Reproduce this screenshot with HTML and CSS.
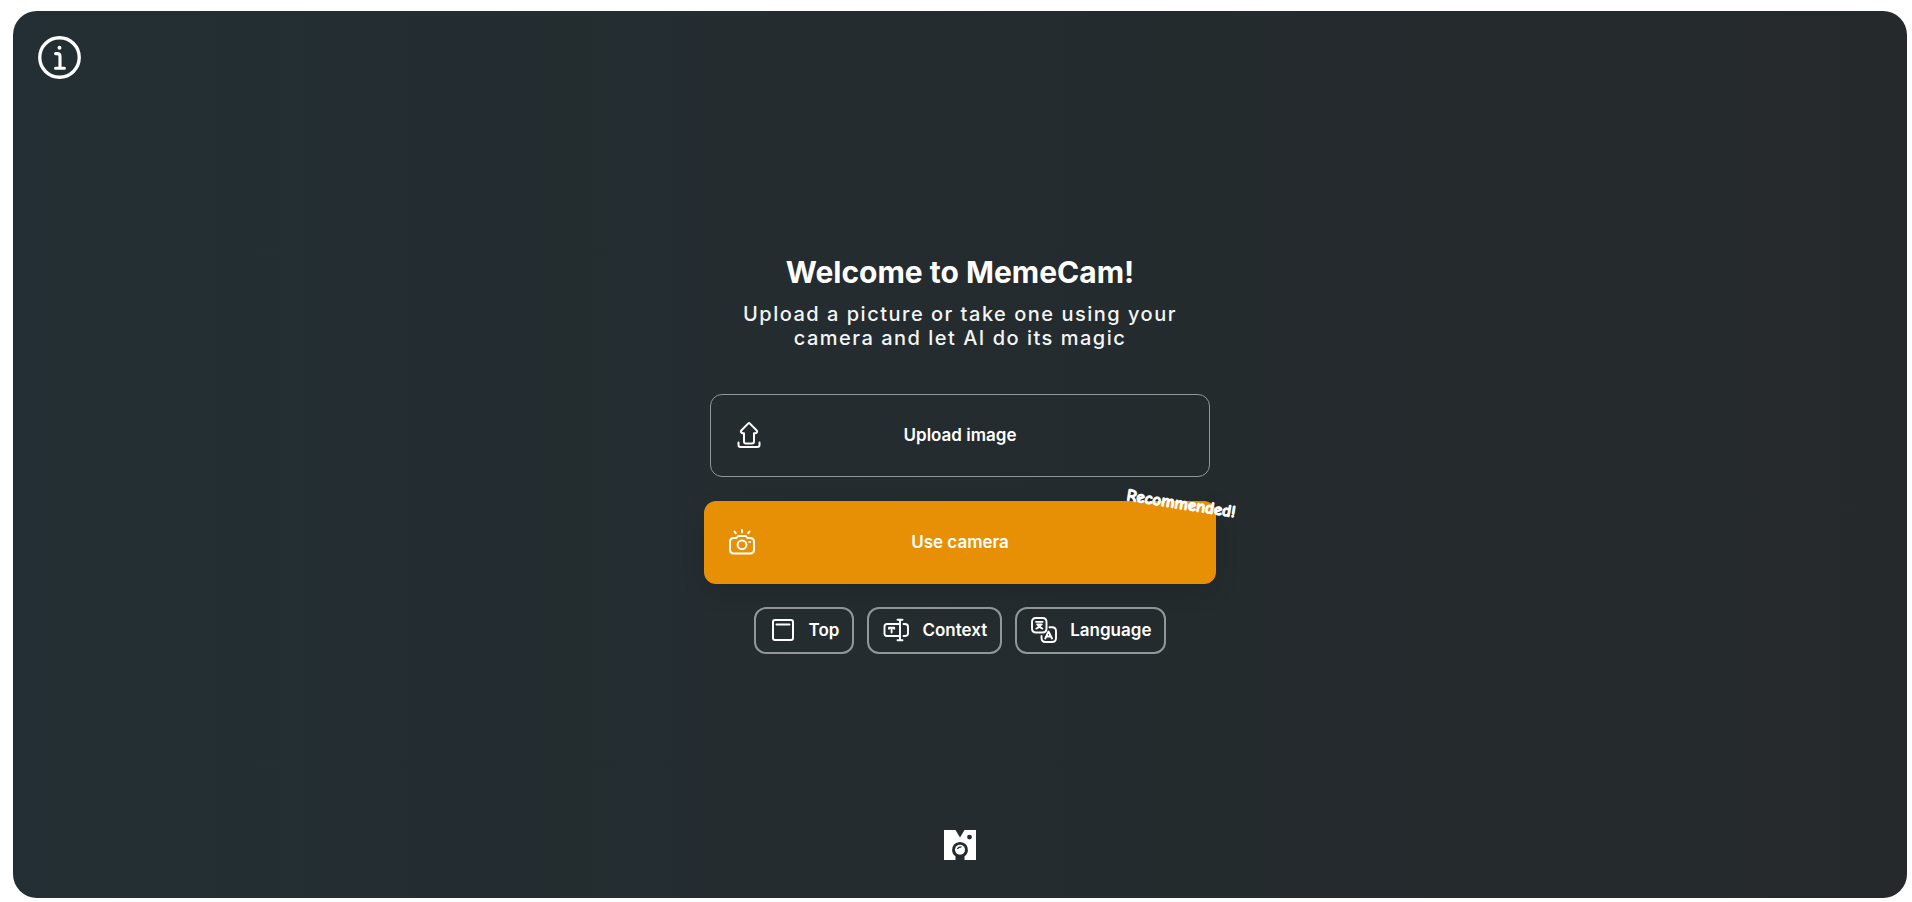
FILE: index.html
```html
<!DOCTYPE html>
<html lang="en">
<head>
<meta charset="utf-8">
<meta name="viewport" content="width=device-width, initial-scale=1">
<title>MemeCam</title>
<link rel="stylesheet" href="styles.css">
</head>
<body>
<div class="card">
  <header class="top">
    <button class="info" type="button" aria-label="About">
      <svg viewBox="0 0 44 44" width="43" height="43" fill="none" stroke="currentColor" stroke-linecap="round" stroke-linejoin="round">
        <circle cx="22" cy="22" r="20.200" stroke-width="3.400"/>
        <path d="M18 18h1.500q3 0 3 3v12M18 33h9" stroke-width="3.200"/>
        <circle cx="22" cy="12" r="2" fill="currentColor" stroke="none"/>
      </svg>
    </button>
  </header>
  <main class="content">
    <h1 class="title">Welcome to MemeCam!</h1>
    <p class="subtitle">Upload a picture or take one using your camera and let AI do its magic</p>
    <button class="action action-upload" type="button">
      <svg class="action-icon" viewBox="0 0 26 26" width="26" height="26" fill="none" stroke="currentColor" stroke-width="2" stroke-linecap="round" stroke-linejoin="round">
        <path d="M12.300 1.400q.700-.6 1.400 0l6.800 6.800c1.300 1.400.2 3-1.400 3H18v8.300q0 2-2 2h-6q-2 0-2-2v-8.300H6.900c-1.600 0-2.700-1.600-1.400-3zM2.500 20.500v2.500q0 2 2 2h17q2 0 2-2v-2.500"/>
      </svg>
      <span>Upload image</span>
    </button>
    <button class="action action-camera" type="button">
      <svg class="action-icon" viewBox="0 0 26 26" width="26" height="26" fill="none" stroke="currentColor" stroke-width="2" stroke-linecap="round" stroke-linejoin="round">
        <path d="M13 1v2.200M5.500 2.500l1.200 1.700M20.500 2.500l-1.200 1.700M5 9h2.500l1.200-1.500Q9.200 7 10 7h6q.8 0 1.300.5L18.500 9H21q4 0 4 4v7.500q0 4-4 4H5q-4 0-4-4V13q0-4 4-4z"/>
        <circle cx="13" cy="15.800" r="4.400"/>
        <path d="M20 13h1.200M21.200 12.800v.4" stroke-width="1.600"/>
      </svg>
      <span>Use camera</span>
      <span class="badge">Recommended!</span>
    </button>
    <div class="chips">
      <button class="chip" type="button">
        <svg viewBox="0 0 26 26" width="26" height="26" fill="none" stroke="currentColor" stroke-width="2" stroke-linecap="round" stroke-linejoin="round">
          <rect x="3" y="3" width="20" height="20" rx="2"/><path d="M6.500 7.500h13"/>
        </svg>
        <span>Top</span>
      </button>
      <button class="chip" type="button">
        <svg viewBox="0 0 26 26" width="26" height="26" fill="none" stroke="currentColor" stroke-width="1.900" stroke-linecap="round" stroke-linejoin="round">
          <path d="M17 3v20M14.500 2.800h5M14.500 23.200h5M16.500 7H4Q1.500 7 1.500 9.500v7Q1.500 19 4 19h12.500M20.500 7h1Q25 7 25 9.500v7q0 2.500-3.500 2.500h-1"/>
          <path d="M6 11.700v-.9h5.200v.9M8.600 10.800v4.700"/>
        </svg>
        <span>Context</span>
      </button>
      <button class="chip" type="button">
        <svg viewBox="0 0 26 26" width="26" height="26" fill="none" stroke="currentColor" stroke-width="1.900" stroke-linecap="round" stroke-linejoin="round">
          <path d="M15.500 10.500v1q0 4-4 4H5q-4 0-4-4V5q0-4 4-4h6.500q4 0 4 4zM18.500 10.200H21q4 0 4 4V21q0 4-4 4h-6.500q-4 0-4-4v-2"/>
          <path d="M5 4.800h6.700M6.500 7.300q1 3.200 5 4.300M10.200 7.300q-1 3.200-5 4.300M6 7.300h4.800" stroke-width="1.700"/>
          <path d="M14.300 21.500l3.200-7 3.500 7M15.500 19.500h4.300"/>
        </svg>
        <span>Language</span>
      </button>
    </div>
  </main>
  <footer class="bottom">
    <svg viewBox="0 0 32 30" width="32" height="30" role="img" aria-label="MemeCam logo">
      <path fill="#fff" fill-rule="evenodd" d="M0 0h11.500l4.500 7.500L20.500 0H32v30H20.500v-3.500a8 8 0 1 0-9 0V30H0zM25.500 4.700a2.400 2.400 0 1 0 0 4.800 2.400 2.400 0 0 0 0-4.800z"/>
      <circle cx="16" cy="19.700" r="5" fill="#fff"/>
      <path d="M13.300 18.800q1.500-2 4.200-1.900" fill="none" stroke="#242c2f" stroke-width="1.200"/>
    </svg>
  </footer>
</div>
</body>
</html>
```
FILE: styles.css
```css
* {
  box-sizing: border-box;
}

body {
  margin: 0;
  min-height: 100vh;
  padding: 11px 5px 4px 13px;
  display: flex;
  background: #fff;
  color: #fff;
  font-family: Inter, "Liberation Sans", sans-serif;
}

button {
  color: inherit;
  font: inherit;
  background: none;
  border: 0;
  cursor: pointer;
}

svg {
  display: block;
  flex: none;
}

.card {
  flex: 1;
  display: grid;
  grid-template-rows: 1fr auto 1fr;
  border-radius: 24px;
  background: linear-gradient(90deg, #232f34 0%, #242c2f 45%, #25292b 100%);
}

.top {
  padding: 25px;
}

.info {
  padding: 0;
  border-radius: 50%;
}

.content {
  display: flex;
  flex-direction: column;
  align-items: center;
  padding: 0 16px 1px;
}

.title {
  margin: 0;
  font-size: 30px;
  line-height: 36px;
  font-weight: 700;
}

.subtitle {
  margin: 12px 0 44px;
  max-width: 450px;
  text-align: center;
  font-size: 20px;
  line-height: 24px;
  font-weight: 500;
  letter-spacing: 1.5px;
  color: #f4f5f5;
}

.action {
  position: relative;
  display: flex;
  align-items: center;
  justify-content: center;
  width: 100%;
  height: 83px;
  padding: 0 0 2px;
  border-radius: 12px;
  font-size: 17px;
  font-weight: 600;
}

.action-upload {
  max-width: 500px;
  border: 1px solid #92979a;
}

.action-camera {
  max-width: 512px;
  margin: 24px 0 23px;
  background: #e79006;
  box-shadow: 0 8px 24px rgba(0, 0, 0, 0.12);
}

.action-icon {
  position: absolute;
  left: 25px;
}

.badge {
  position: absolute;
  top: -9px;
  right: -20px;
  font-family: "Comic Sans MS", "Comic Neue", Lato, sans-serif;
  font-size: 17px;
  line-height: 24px;
  font-weight: 900;
  -webkit-text-stroke: 1px currentColor;
  transform: rotate(9deg);
}

.chips {
  display: flex;
  flex-wrap: wrap;
  justify-content: center;
  gap: 13px;
}

.chip {
  display: flex;
  align-items: center;
  gap: 13px;
  height: 47px;
  padding: 0 13px 1px 14px;
  border: 2px solid #92979a;
  border-radius: 12px;
  font-size: 17px;
  font-weight: 600;
}

.bottom {
  display: flex;
  align-items: flex-end;
  justify-content: center;
  padding-bottom: 38px;
}
```
